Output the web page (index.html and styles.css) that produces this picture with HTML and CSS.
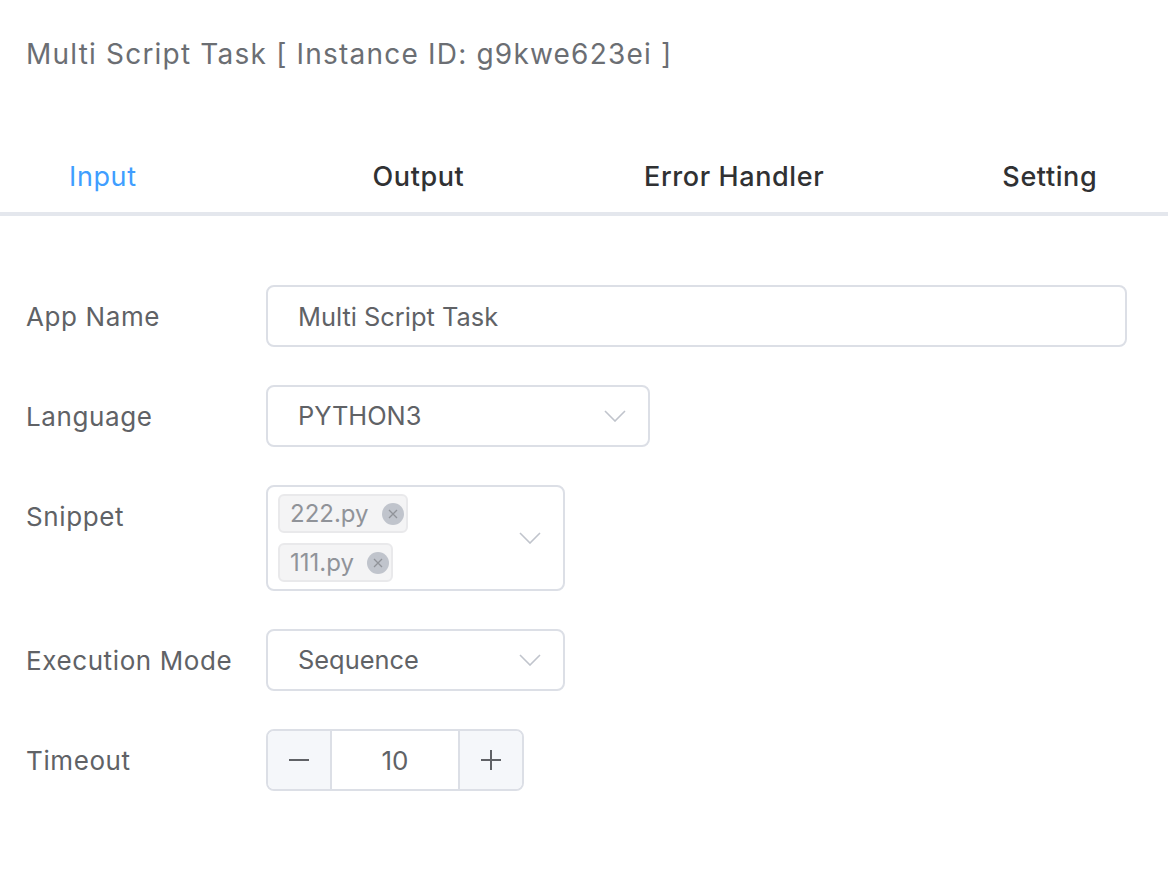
FILE: index.html
```html
<!DOCTYPE html>
<html lang="en">
<head>
<meta charset="utf-8">
<title>Multi Script Task</title>
<link rel="stylesheet" href="styles.css">
</head>
<body>
<div class="panel">
  <h1 class="title">Multi Script Task [ Instance ID: g9kwe623ei ]</h1>

  <div class="tabs">
    <div class="tab-nav">
      <div class="tab is-active">Input</div>
      <div class="tab">Output</div>
      <div class="tab">Error Handler</div>
      <div class="tab">Setting</div>
    </div>
    <span class="tab-bar"></span>
  </div>

  <form class="form">
    <div class="form-item">
      <label class="form-label">App Name</label>
      <div class="input input-wide">Multi Script Task</div>
    </div>

    <div class="form-item">
      <label class="form-label">Language</label>
      <div class="input select select-lang">
        <span class="select-value">PYTHON3</span>
        <svg class="arrow" width="22" height="12" viewBox="0 0 22 12"><path d="M1 1 L11 11 L21 1" fill="none" stroke="#c0c4cc" stroke-width="1.6"/></svg>
      </div>
    </div>

    <div class="form-item">
      <label class="form-label">Snippet</label>
      <div class="input select select-multi">
        <div class="tags">
          <span class="tag">222.py<span class="tag-close"><svg width="22" height="22" viewBox="0 0 22 22"><circle cx="11" cy="11" r="11" fill="#c0c4cc"/><path d="M7 7 L15 15 M15 7 L7 15" stroke="#909399" stroke-width="1.3"/></svg></span></span>
          <span class="tag">111.py<span class="tag-close"><svg width="22" height="22" viewBox="0 0 22 22"><circle cx="11" cy="11" r="11" fill="#c0c4cc"/><path d="M7 7 L15 15 M15 7 L7 15" stroke="#909399" stroke-width="1.3"/></svg></span></span>
        </div>
        <svg class="arrow" width="22" height="12" viewBox="0 0 22 12"><path d="M1 1 L11 11 L21 1" fill="none" stroke="#c0c4cc" stroke-width="1.6"/></svg>
      </div>
    </div>

    <div class="form-item">
      <label class="form-label">Execution Mode</label>
      <div class="input select select-mode">
        <span class="select-value">Sequence</span>
        <svg class="arrow" width="22" height="12" viewBox="0 0 22 12"><path d="M1 1 L11 11 L21 1" fill="none" stroke="#c0c4cc" stroke-width="1.6"/></svg>
      </div>
    </div>

    <div class="form-item">
      <label class="form-label">Timeout</label>
      <div class="number">
        <span class="num-btn num-minus"><svg width="20" height="20" viewBox="0 0 20 20"><path d="M0 10 H20" stroke="#606266" stroke-width="2"/></svg></span>
        <span class="num-value">10</span>
        <span class="num-btn num-plus"><svg width="20" height="20" viewBox="0 0 20 20"><path d="M0 10 H20 M10 0 V20" stroke="#606266" stroke-width="2"/></svg></span>
      </div>
    </div>
  </form>
</div>
</body>
</html>
```

FILE: styles.css
```css
* { box-sizing: border-box; }

html, body {
  margin: 0;
  padding: 0;
  background: #ffffff;
}

body {
  font-family: Inter, "Noto Sans", "Liberation Sans", sans-serif;
  color: #606266;
  width: 1168px;
  height: 888px;
  overflow: hidden;
}

.panel {
  width: 1168px;
}

.title {
  margin: 34px 0 0 26px;
  font-size: 28px;
  line-height: 40px;
  font-weight: 400;
  color: #6b6e73;
  letter-spacing: 1.2px;
  white-space: nowrap;
}

.tabs {
  position: relative;
  margin-top: 66px;
  border-bottom: 4px solid #e4e7ed;
  overflow: hidden;
}

.tab-nav {
  display: grid;
  grid-template-columns: repeat(4, 315.67px);
  margin-left: -55px;
  height: 72px;
}

.tab {
  text-align: center;
  font-size: 27px;
  line-height: 74px;
  font-weight: 500;
  color: #303133;
  letter-spacing: 0.6px;
  white-space: nowrap;
}

.tab.is-active {
  color: #409eff;
  font-weight: 400;
}

.tab-bar {
  position: absolute;
  left: 0;
  bottom: -4px;
  width: 221px;
  height: 4px;
  background: #409eff;
}

.form {
  margin-top: 69px;
}

.form-item {
  display: flex;
  align-items: flex-start;
  margin-bottom: 38px;
}

.form-label {
  width: 266px;
  height: 62px;
  padding-left: 26px;
  font-size: 26px;
  line-height: 64px;
  color: #606266;
  letter-spacing: 0.6px;
  white-space: nowrap;
}

.input {
  height: 62px;
  border: 2px solid #dcdfe6;
  border-radius: 8px;
  padding: 0 30px;
  font-size: 25.4px;
  line-height: 60px;
  color: #606266;
  background: #fff;
  white-space: nowrap;
}

.input-wide {
  width: 861px;
}

.select {
  display: flex;
  align-items: center;
  justify-content: space-between;
  padding-right: 22px;
}

.select-lang { width: 384px; }
.select-mode { width: 299px; }

.select-multi {
  width: 299px;
  height: 106px;
  padding: 7px 22px 7px 10px;
  line-height: normal;
}

.tags {
  display: flex;
  flex-direction: column;
  align-items: flex-start;
  gap: 10px;
}

.tag {
  display: inline-flex;
  align-items: center;
  height: 39px;
  padding: 0 2px 0 10px;
  border: 2px solid #e9e9eb;
  border-radius: 6px;
  background: #f4f4f5;
  color: #909399;
  font-size: 24px;
}

.tag-close {
  display: inline-flex;
  margin-left: 13px;
}

.arrow {
  display: block;
  flex: none;
}

.number {
  display: flex;
  width: 258px;
  height: 62px;
  border: 2px solid #dcdfe6;
  border-radius: 8px;
  overflow: hidden;
}

.num-btn {
  width: 64px;
  flex: none;
  display: flex;
  align-items: center;
  justify-content: center;
  background: #f5f7fa;
}

.num-minus { border-right: 2px solid #dcdfe6; }
.num-plus { border-left: 2px solid #dcdfe6; }

.num-value {
  flex: 1;
  text-align: center;
  font-size: 26px;
  line-height: 60px;
  color: #606266;
}
```
